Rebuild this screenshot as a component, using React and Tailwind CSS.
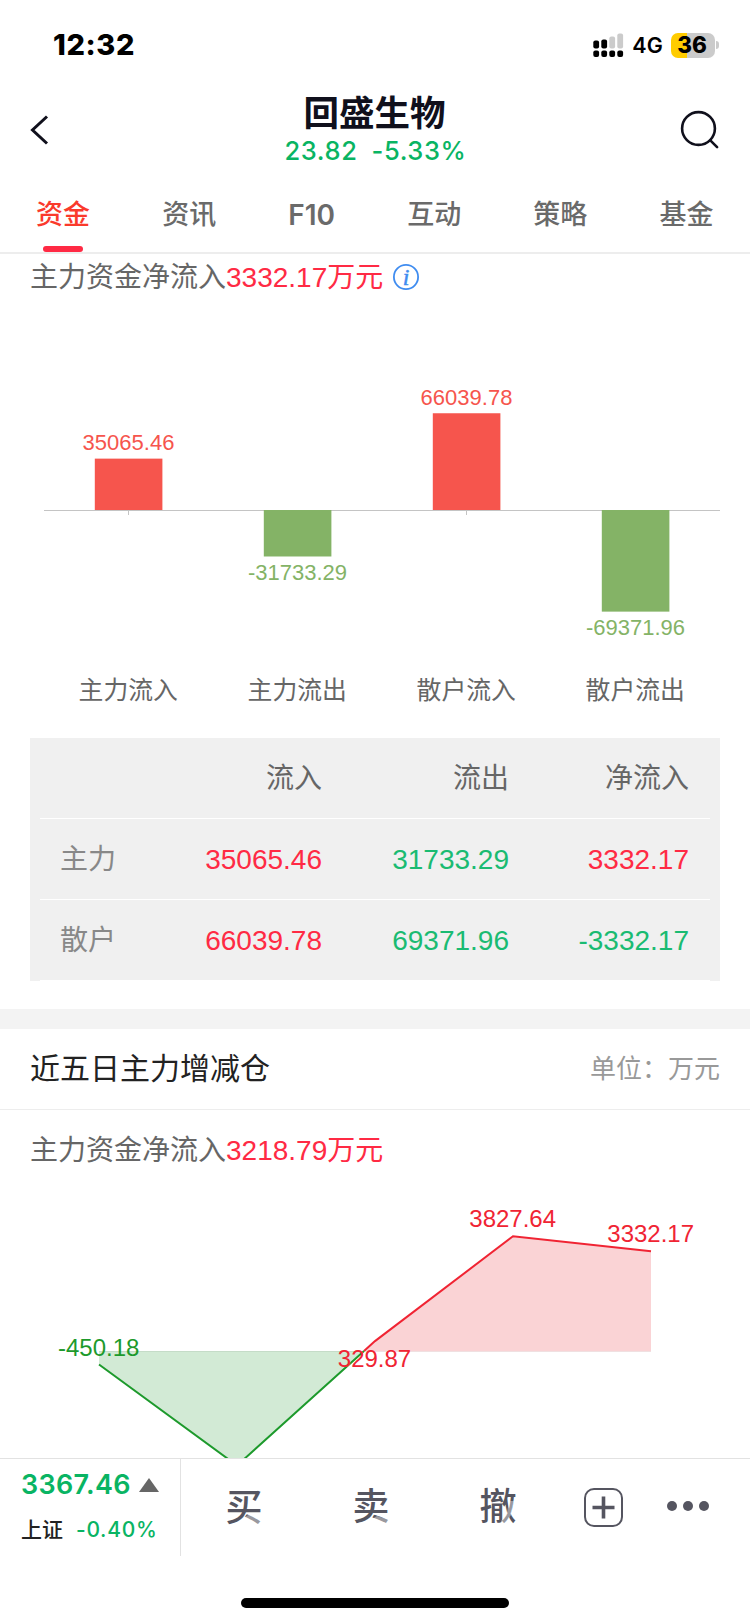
import { useState } from 'react';

const TABS = ['资金', '资讯', 'F10', '互动', '策略', '基金'];

const FLOWS = [
  { label: '主力流入', value: 35065.46 },
  { label: '主力流出', value: -31733.29 },
  { label: '散户流入', value: 66039.78 },
  { label: '散户流出', value: -69371.96 },
];

const ROWS = [
  { name: '主力', inflow: '35065.46', outflow: '31733.29', net: 3332.17 },
  { name: '散户', inflow: '66039.78', outflow: '69371.96', net: -3332.17 },
];

const DAYS = [-450.18, -3820.71, 329.87, 3827.64, 3332.17];

function StatusBar() {
  return (
    <div className="flex h-[90px] shrink-0 items-center justify-between pl-[53px] pr-[31px] font-['Inter',sans-serif] text-black">
      <span className="pb-[1px] text-[29px] font-extrabold leading-none tracking-[0.6px]">12:32</span>
      <div className="flex items-center">
        <svg width="31" height="26" viewBox="0 0 31 26">
          {[0, 8, 16, 24].map(x => <rect key={x} x={x + 0.3} y="18.5" width="5.8" height="6.6" rx="2" />)}
          <rect x="0.3" y="8.5" width="5.8" height="8" rx="2" />
          <rect x="8.3" y="7.5" width="5.8" height="9" rx="2" />
          <rect x="16.3" y="4.5" width="5.8" height="12" rx="2" fill="#cbcbcb" />
          <rect x="24.3" y="1.5" width="5.8" height="15" rx="2" fill="#cbcbcb" />
        </svg>
        <span className="ml-[8px] pt-[1px] text-[21.5px] font-semibold leading-none tracking-[0.2px]">4G</span>
        <div className="ml-[8px] flex h-[25px] w-[44px] items-center justify-center rounded-[7px] bg-linear-to-r from-[#ffcc00] from-36% to-[#cbcbcb] to-36%">
          <span className="pr-[2px] text-[22.5px] font-extrabold leading-none">36</span>
        </div>
        <div className="ml-[1px] h-[8px] w-[3px] rounded-r-full bg-[#cbcbcb]" />
      </div>
    </div>
  );
}

function Header() {
  return (
    <div className="flex h-[84px] shrink-0 items-start justify-between pl-[30px] pr-[30px] text-[#10101c]">
      <svg className="mt-[25px]" width="50" height="30" viewBox="0 0 50 30" fill="none" stroke="currentColor" strokeWidth="3">
        <path d="M17 1.5 2.5 15 17 28.5" />
      </svg>
      <div className="text-center">
        <div className="-ml-px pt-[2px] text-[35.5px] font-bold leading-[44px]">回盛生物</div>
        <div className="flex justify-center gap-[14px] pl-[1px] font-['Inter',sans-serif] text-[25.5px] font-medium leading-[29px] tracking-[0.6px] text-[#09b463]">
          <span>23.82</span>
          <span>-5.33%</span>
        </div>
      </div>
      <svg className="mt-[20px] ml-[10px]" width="40" height="40" viewBox="0 0 40 40" fill="none" stroke="currentColor" strokeWidth="2.6" strokeLinecap="round">
        <circle cx="18.5" cy="18.5" r="16.4" />
        <path d="m30.3 30.3 6.8 6.8" />
      </svg>
    </div>
  );
}

function Tabs() {
  const [active, setActive] = useState('资金');
  return (
    <div className="flex h-[80px] shrink-0 justify-between border-b-2 border-[#ededed] pl-[36px] pr-[36.5px] font-['Inter','Noto_Sans_CJK_SC',sans-serif] text-[27px] font-medium text-[#6a6a6a]">
      {TABS.map(tab => (
        <button key={tab} onClick={() => setActive(tab)}
          className={`flex flex-col items-center ${active === tab ? 'text-[#fa3a2c]' : ''}`}>
          <span className={`h-[72px] leading-[82px] ${tab === 'F10' ? 'text-[28px] font-semibold' : ''}`}>{tab}</span>
          {active === tab && <span className="h-[6px] w-[40px] rounded-full bg-[#ff2a44]" />}
        </button>
      ))}
    </div>
  );
}

function NetInflow({ amount, info }) {
  return (
    <div className="flex h-[46px] items-center text-[28px] leading-[46px] text-[#666]">
      <span className="pt-[2px]">主力资金净流入<span className="text-[#ff2a44]">{amount}万元</span></span>
      {info && (
        <svg className="ml-[10px]" width="26" height="26" viewBox="0 0 26 26">
          <circle cx="13" cy="13" r="12.1" fill="none" stroke="#3f8cf0" strokeWidth="1.8" />
          <text x="13" y="20.5" textAnchor="middle" fill="#3f8cf0" stroke="#3f8cf0" strokeWidth="0.5" className="font-['Liberation_Serif',serif] text-[24px] italic">i</text>
        </svg>
      )}
    </div>
  );
}

function FlowChart() {
  const zero = 210;
  return (
    <svg className="block" width="690" height="438" viewBox="0 0 690 438">
      <path d="M14 210.5H690M98.5 210V215M436.5 210V215" stroke="#c4c4c4" fill="none" />
      {FLOWS.map((f, i) => {
        const up = f.value > 0;
        const h = Math.abs(f.value) * 0.001465;
        const cx = 98.5 + i * 169;
        const color = up ? '#f6554d' : '#84b366';
        return (
          <g key={f.label} textAnchor="middle">
            <rect x={cx - 33.7} y={up ? zero - h : zero} width="67.6" height={h} fill={color} />
            <text x={cx} y={up ? zero - h - 8.5 : zero + h + 23.4} fill={color} className="text-[22px]">{f.value.toFixed(2)}</text>
            <text x={cx - 0.3} y="399" fill="#666" className="text-[24.8px]">{f.label}</text>
          </g>
        );
      })}
    </svg>
  );
}

function FlowTable() {
  const row = 'grid h-[81px] grid-cols-[71px_191px_187px_180px] items-center border-b border-white pl-[20px] pt-[2px] text-right';
  return (
    <div className="bg-[#f0f0f0] px-[10px] text-[28px] text-[#666]">
      <div className={row}>
        <span />
        <span>流入</span>
        <span>流出</span>
        <span>净流入</span>
      </div>
      {ROWS.map(r => (
        <div key={r.name} className={row}>
          <span className="text-left text-[#888]">{r.name}</span>
          <span className="text-[#ff2a44]">{r.inflow}</span>
          <span className="text-[#1abb72]">{r.outflow}</span>
          <span className={r.net > 0 ? 'text-[#ff2a44]' : 'text-[#1abb72]'}>{r.net.toFixed(2)}</span>
        </div>
      ))}
    </div>
  );
}

function TrendChart() {
  const zero = 178;
  const pts = DAYS.map((v, i) => [69 + i * 138, zero - v * 0.02997]);
  // x where the line goes from outflow to inflow
  const cross = pts[1][0] + 138 * (-DAYS[1] / (DAYS[2] - DAYS[1]));
  const down = `M${pts[0]}L${pts[1]}L${cross} ${zero}`;
  const up = `M${cross} ${zero}L${pts[2]}L${pts[3]}L${pts[4]}`;
  return (
    <svg className="block" width="690" height="330" viewBox="0 0 690 330">
      <path d={`${down}H${pts[0][0]}Z`} fill="#d2ead5" />
      <path d={`${up}V${zero}Z`} fill="#fad3d5" />
      <path d={`M69 ${zero + 0.5}H${cross}`} stroke="#c5dcc8" />
      <path d={`M${cross} ${zero + 0.5}H621`} stroke="#f0e0e1" />
      <path d={up} fill="none" stroke="#f02433" strokeWidth="2" />
      <path d={down} fill="none" stroke="#1d9a2c" strokeWidth="2" />
      <g textAnchor="middle" fill="#f02433" className="text-[24px]">
        <text x="68.7" y="183" fill="#1d9a2c">-450.18</text>
        <text x="344.5" y="194">329.87</text>
        <text x="482.7" y="54">3827.64</text>
        <text x="620.7" y="69">3332.17</text>
      </g>
    </svg>
  );
}

function TradeButton({ children, fade }) {
  return (
    <button className="relative size-[38px] text-[37px] font-medium leading-[40px]">
      {children}
      <svg className="absolute inset-0" width="38" height="38" viewBox="0 0 38 38">
        <path d={fade} fill="#fff" fillOpacity="0.4" />
      </svg>
    </button>
  );
}

function BottomBar() {
  return (
    <div className="h-[166px] shrink-0 border-t border-[#e2e2e2] bg-white">
      <div className="flex h-[97px] text-[#555560]">
        <div className="w-[181px] border-r border-[#e2e2e2] pl-[21px] font-['Inter','Noto_Sans_CJK_SC',sans-serif]">
          <div className="flex items-center pt-[8px] text-[27px] font-semibold leading-[36px] tracking-[0.3px] text-[#09b463]">
            <span className="w-[118px]">3367.46</span>
            <svg width="20" height="14" viewBox="0 0 20 14"><path d="M10 0 20 14H0Z" fill="#666" /></svg>
          </div>
          <div className="flex gap-[13px] pt-[12px] text-[21px] font-medium leading-[30px]">
            <span className="text-[#222]">上证</span>
            <span className="tracking-[0.7px] text-[#09b463]">-0.40%</span>
          </div>
        </div>
        <div className="flex flex-1 items-center pl-[44px]">
          <TradeButton fade="M20 28 25 25 38 31V38H32Z">买</TradeButton>
          <div className="ml-[89px]"><TradeButton fade="M20 31 25 28 38 32V38H32Z">卖</TradeButton></div>
          <div className="ml-[89px]"><TradeButton fade="M30 13H35L32 27 25 37H22V33L28 25Z">撤</TradeButton></div>
          <svg className="ml-[67px]" width="39" height="39" viewBox="0 0 39 39" fill="none" stroke="currentColor">
            <rect x="1" y="1" width="37" height="37" rx="9" strokeWidth="2" />
            <path d="M19.5 8.5v22M8.5 19.5h22" strokeWidth="3.6" />
          </svg>
          <svg className="mb-[3px] ml-[44px]" width="42" height="10" viewBox="0 0 42 10" fill="currentColor">
            <circle cx="5" cy="5" r="5" />
            <circle cx="21" cy="5" r="5" />
            <circle cx="37" cy="5" r="5" />
          </svg>
        </div>
      </div>
      <div className="mx-auto mt-[42px] h-[10px] w-[268px] rounded-full bg-black" />
    </div>
  );
}

export default function App() {
  return (
    <div lang="zh-CN" className="flex h-[1624px] w-[750px] flex-col overflow-hidden bg-white font-['Liberation_Sans','Noto_Sans_CJK_SC',sans-serif]">
      <StatusBar />
      <Header />
      <Tabs />
      <div className="flex min-h-0 flex-1 flex-col overflow-hidden">
        <div className="h-[755px] shrink-0 px-[30px]">
          <NetInflow amount="3332.17" info />
          <FlowChart />
          <FlowTable />
        </div>
        <div className="h-[20px] shrink-0 bg-[#f3f3f3]" />
        <div className="flex h-[81px] shrink-0 items-center justify-between border-b border-[#ededed] px-[30px]">
          <h2 className="pb-[2px] text-[30px] text-[#222]">近五日主力增减仓</h2>
          <span className="text-[26px] text-[#999]">单位：万元</span>
        </div>
        <div className="h-[348px] shrink-0 px-[30px] pt-[17px]">
          <NetInflow amount="3218.79" />
          <TrendChart />
        </div>
      </div>
      <BottomBar />
    </div>
  );
}
